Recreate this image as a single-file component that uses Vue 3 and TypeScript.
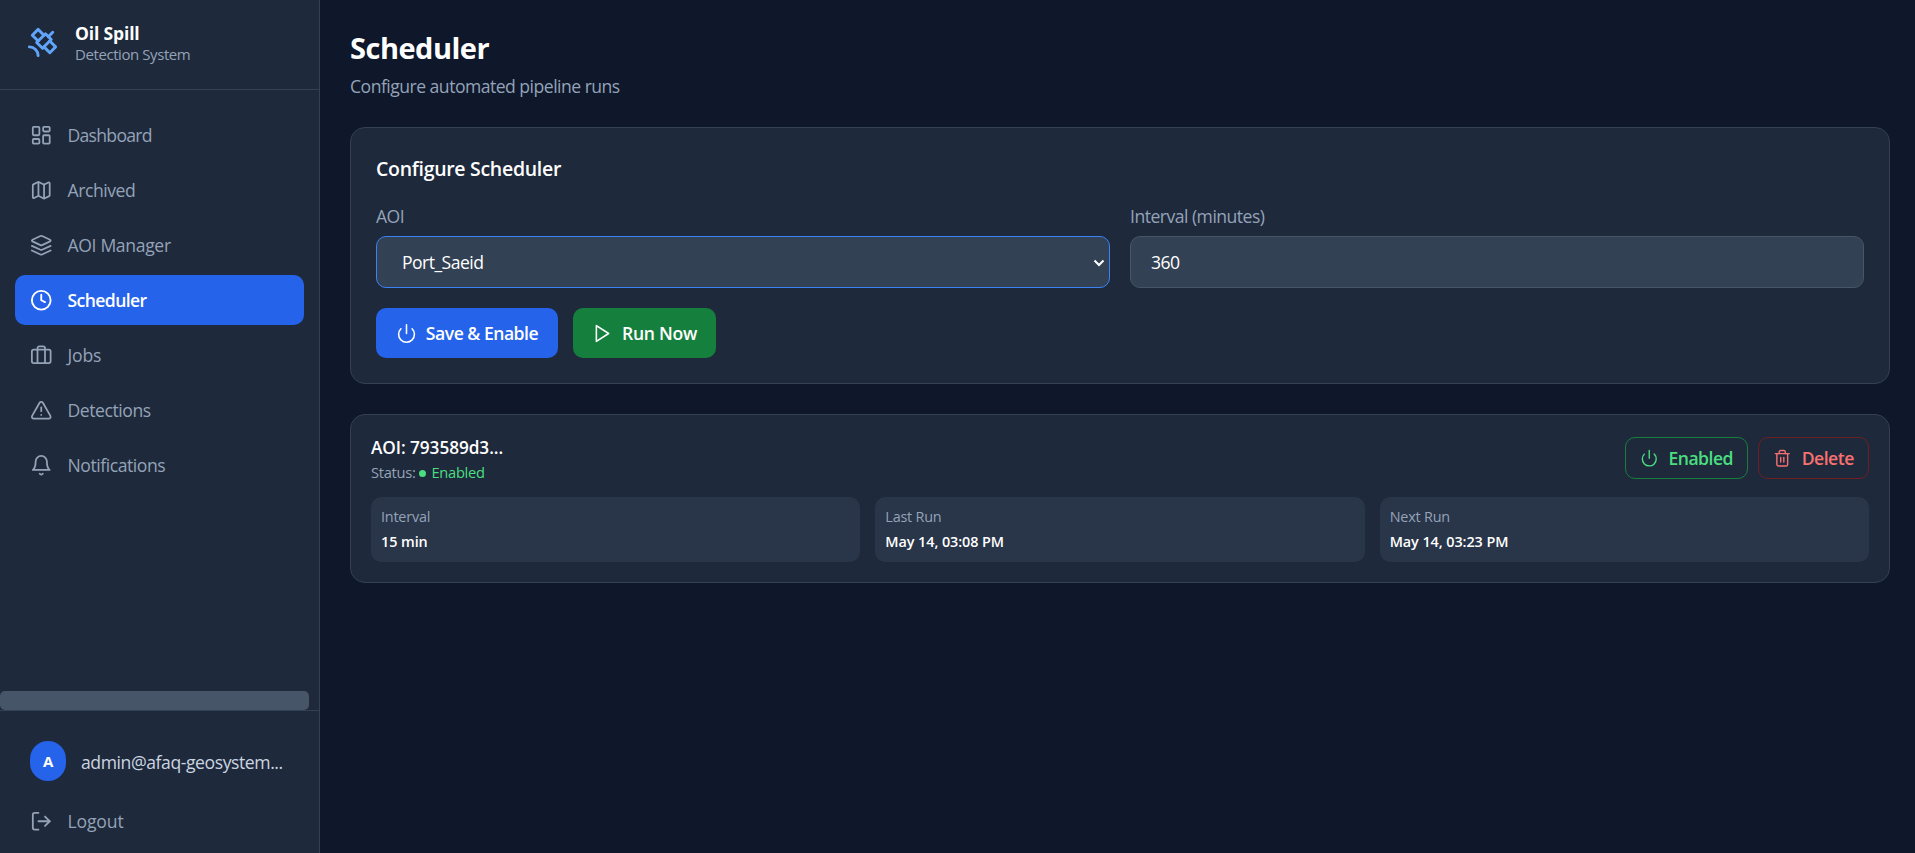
<script setup lang="ts">
import { ref } from 'vue'

interface NavItem {
  id: string
  label: string
  paths: string[]
}

const navItems: NavItem[] = [
  {
    id: 'dashboard',
    label: 'Dashboard',
    paths: [
      'M4 3h5a1 1 0 0 1 1 1v7a1 1 0 0 1-1 1H4a1 1 0 0 1-1-1V4a1 1 0 0 1 1-1z',
      'M15 3h5a1 1 0 0 1 1 1v3a1 1 0 0 1-1 1h-5a1 1 0 0 1-1-1V4a1 1 0 0 1 1-1z',
      'M15 12h5a1 1 0 0 1 1 1v7a1 1 0 0 1-1 1h-5a1 1 0 0 1-1-1v-7a1 1 0 0 1 1-1z',
      'M4 16h5a1 1 0 0 1 1 1v3a1 1 0 0 1-1 1H4a1 1 0 0 1-1-1v-3a1 1 0 0 1 1-1z',
    ],
  },
  {
    id: 'archived',
    label: 'Archived',
    paths: [
      'M14.106 5.553a2 2 0 0 0 1.788 0l3.659-1.83A1 1 0 0 1 21 4.619v12.764a1 1 0 0 1-.553.894l-4.553 2.277a2 2 0 0 1-1.788 0l-4.212-2.106a2 2 0 0 0-1.788 0l-3.659 1.83A1 1 0 0 1 3 19.381V6.618a1 1 0 0 1 .553-.894l4.553-2.277a2 2 0 0 1 1.788 0z',
      'M15 5.764v15',
      'M9 3.236v15',
    ],
  },
  {
    id: 'aoi',
    label: 'AOI Manager',
    paths: [
      'M12.83 2.18a2 2 0 0 0-1.66 0L2.6 6.08a1 1 0 0 0 0 1.83l8.58 3.91a2 2 0 0 0 1.66 0l8.58-3.9a1 1 0 0 0 0-1.83Z',
      'm22 17.65-9.17 4.16a2 2 0 0 1-1.66 0L2 17.65',
      'm22 12.65-9.17 4.16a2 2 0 0 1-1.66 0L2 12.65',
    ],
  },
  {
    id: 'scheduler',
    label: 'Scheduler',
    paths: ['M12 2a10 10 0 1 0 0 20 10 10 0 1 0 0-20z', 'M12 6v6l4 2'],
  },
  {
    id: 'jobs',
    label: 'Jobs',
    paths: [
      'M4 6h16a2 2 0 0 1 2 2v10.500a2 2 0 0 1-2 2H4a2 2 0 0 1-2-2V8a2 2 0 0 1 2-2z',
      'M16 20.500V4.500a2 2 0 0 0-2-2h-4a2 2 0 0 0-2 2v16',
    ],
  },
  {
    id: 'detections',
    label: 'Detections',
    paths: [
      'm21.730 18-8-14a2 2 0 0 0-3.480 0l-8 14A2 2 0 0 0 4 21h16a2 2 0 0 0 1.730-3Z',
      'M12 9v4',
      'M12 17h.01',
    ],
  },
  {
    id: 'notifications',
    label: 'Notifications',
    paths: ['M6 8a6 6 0 0 1 12 0c0 7 3 9 3 9H3s3-2 3-9', 'M10.300 21a1.940 1.940 0 0 0 3.400 0'],
  },
]

const active = ref('scheduler')
const aoi = ref('Port_Saeid')
const interval = ref('360')

const stats = [
  { label: 'Interval', value: '15 min' },
  { label: 'Last Run', value: 'May 14, 03:08 PM' },
  { label: 'Next Run', value: 'May 14, 03:23 PM' },
]
</script>

<template>
  <div class="shell">
    <aside class="sidebar">
      <header class="brand">
        <svg class="brand-icon" viewBox="0 0 24 24">
          <path d="M13 7 9 3 5 7l4 4" />
          <path d="m17 11 4 4-4 4-4-4" />
          <path d="m8 12 4 4 6-6-4-4Z" />
          <path d="m16 8 3-3" />
          <path d="M9 21a6 6 0 0 0-6-6" />
        </svg>
        <div>
          <div class="brand-name">Oil Spill</div>
          <div class="brand-sub">Detection System</div>
        </div>
      </header>

      <nav class="nav">
        <a
          v-for="item in navItems"
          :key="item.id"
          class="nav-item"
          :class="[item.id, { active: item.id === active }]"
          @click="active = item.id"
        >
          <svg class="icon" viewBox="0 0 24 24">
            <path v-for="d in item.paths" :key="d" :d="d" />
          </svg>
          <span>{{ item.label }}</span>
        </a>
      </nav>
      <div class="scroll-thumb"></div>

      <footer class="account">
        <div class="user">
          <div class="avatar">A</div>
          <span class="email">admin@afaq-geosystem...</span>
        </div>
        <a class="nav-item logout">
          <svg class="icon" viewBox="0 0 24 24">
            <path d="M9 21H5a2 2 0 0 1-2-2V5a2 2 0 0 1 2-2h4" />
            <path d="m16 17 5-5-5-5" />
            <path d="M21 12H9" />
          </svg>
          <span>Logout</span>
        </a>
      </footer>
    </aside>

    <main class="main">
      <h1>Scheduler</h1>
      <p class="subtitle">Configure automated pipeline runs</p>

      <section class="card config">
        <h2>Configure Scheduler</h2>
        <div class="fields">
          <div class="field">
            <label for="aoi">AOI</label>
            <div class="select-wrap">
              <select id="aoi" v-model="aoi" class="control focused">
                <option>Port_Saeid</option>
              </select>
              <svg class="chevron" viewBox="0 0 12 8"><path d="m1.500 1.500 4.500 4.500 4.500-4.500" /></svg>
            </div>
          </div>
          <div class="field">
            <label for="interval">Interval (minutes)</label>
            <input id="interval" v-model="interval" class="control" type="text" />
          </div>
        </div>
        <div class="actions">
          <button class="btn save">
            <svg class="btn-icon" viewBox="0 0 24 24">
              <path d="M12 2v10" />
              <path d="M18.400 6.600a9 9 0 1 1-12.770.04" />
            </svg>
            <span>Save &amp; Enable</span>
          </button>
          <button class="btn run">
            <svg class="btn-icon" viewBox="0 0 24 24"><path d="m5 3 14 9-14 9V3z" /></svg>
            <span>Run Now</span>
          </button>
        </div>
      </section>

      <section class="card job">
        <div class="job-head">
          <div>
            <div class="job-title">AOI: 793589d3...</div>
            <div class="job-status">
              <span>Status:</span><i class="dot"></i><span class="on">Enabled</span>
            </div>
          </div>
          <div class="job-actions">
            <button class="btn small enabled">
              <svg class="btn-icon" viewBox="0 0 24 24">
                <path d="M12 2v10" />
                <path d="M18.400 6.600a9 9 0 1 1-12.770.04" />
              </svg>
              <span>Enabled</span>
            </button>
            <button class="btn small delete">
              <svg class="btn-icon" viewBox="0 0 24 24">
                <path d="M3 6h18" />
                <path d="M19 6v14a2 2 0 0 1-2 2H7a2 2 0 0 1-2-2V6" />
                <path d="M8 6V4a2 2 0 0 1 2-2h4a2 2 0 0 1 2 2v2" />
                <path d="M10 11v6" />
                <path d="M14 11v6" />
              </svg>
              <span>Delete</span>
            </button>
          </div>
        </div>
        <div class="stats">
          <div v-for="s in stats" :key="s.label" class="stat">
            <div class="stat-label">{{ s.label }}</div>
            <div class="stat-value">{{ s.value }}</div>
          </div>
        </div>
      </section>
    </main>
  </div>
</template>

<style>
body {
  margin: 0;
  background: #0f172a;
  overflow: hidden;
}
</style>

<style scoped>
.shell {
  display: flex;
  height: 100vh;
  background: #0f172a;
  color: #fff;
  font-family: "Segoe UI", "Open Sans", "Noto Sans", sans-serif;
  font-size: 17.6px;
  letter-spacing: -0.52px;
}
.shell * {
  box-sizing: border-box;
}
svg {
  display: block;
  flex: none;
  fill: none;
  stroke: currentColor;
  stroke-width: 2;
  stroke-linecap: round;
  stroke-linejoin: round;
}

/* Sidebar */
.sidebar {
  display: flex;
  flex-direction: column;
  flex: none;
  box-sizing: border-box;
  width: 320px;
  background: #1e293b;
  border-right: 1px solid #334155;
}
.brand {
  display: flex;
  gap: 15px;
  height: 90px;
  padding: 22px 25px 0;
  border-bottom: 1px solid #334155;
}
.brand-icon {
  width: 35px;
  height: 35px;
  margin-top: 3px;
  color: #60a5fa;
}
.brand-name {
  font-size: 17.5px;
  font-weight: 700;
  line-height: 22px;
  letter-spacing: -0.15px;
}
.brand-sub {
  font-size: 15px;
  line-height: 20px;
  letter-spacing: -0.42px;
  color: #94a3b8;
}
.nav {
  display: flex;
  flex-direction: column;
  flex: 1;
  gap: 5px;
  padding: 20px 15px 0;
}
.nav-item {
  display: flex;
  align-items: center;
  gap: 15px;
  height: 50px;
  padding: 0 15px;
  border-radius: 10px;
  color: #94a3b8;
  letter-spacing: -0.45px;
  cursor: pointer;
}
.nav-item.active {
  background: #2563eb;
  color: #fff;
  font-weight: 600;
  letter-spacing: -0.6px;
}
.nav-item.dashboard {
  letter-spacing: -0.72px;
}
.nav-item.aoi {
  letter-spacing: -0.35px;
}
.nav-item.jobs,
.nav-item.logout {
  letter-spacing: -0.15px;
}
.icon {
  width: 22.5px;
  height: 22.5px;
}
.nav-item:not(.active) .icon {
  stroke-width: 1.9;
}
.scroll-thumb {
  flex: none;
  width: 309px;
  height: 19px;
  border-radius: 5px;
  background: #475569;
}
.account {
  flex: none;
  height: 143px;
  padding: 15px;
  border-top: 1px solid #334155;
}
.user {
  display: flex;
  align-items: center;
  gap: 15px;
  height: 70px;
  padding: 0 15px;
}
.avatar {
  display: flex;
  align-items: center;
  justify-content: center;
  width: 36px;
  height: 40px;
  border-radius: 18px;
  background: #2563eb;
  font-size: 15px;
  font-weight: 700;
}
.email {
  padding-top: 2px;
  color: #cbd5e1;
  letter-spacing: -0.43px;
}

/* Main column */
.main {
  flex: 1;
  min-width: 0;
  padding: 29px 25px 0 30px;
}
h1 {
  margin: 0;
  font-size: 29px;
  font-weight: 700;
  line-height: 38px;
  letter-spacing: -0.5px;
}
.subtitle {
  margin: 7px 0 29px;
  line-height: 24px;
  color: #94a3b8;
}
.card {
  border: 1px solid #334155;
  border-radius: 15px;
  background: #1e293b;
}
.config {
  padding: 26px 25px 25px;
}
h2 {
  margin: 0 0 21px;
  font-size: 19.5px;
  font-weight: 600;
  line-height: 30px;
  letter-spacing: -0.3px;
}
.fields {
  display: grid;
  grid-template-columns: 1fr 1fr;
  gap: 20px;
}
.field label {
  display: block;
  margin-bottom: 9px;
  line-height: 22px;
  color: #94a3b8;
}
.select-wrap {
  position: relative;
}
.control {
  display: block;
  width: 100%;
  height: 52px;
  margin: 0;
  padding: 0 20px;
  border: 1px solid #475569;
  border-radius: 10px;
  outline: none;
  appearance: none;
  background: #334155;
  color: #fff;
  font: inherit;
  letter-spacing: -0.55px;
}
.control.focused {
  padding-left: 25px;
  border-color: #3b82f6;
}
.chevron {
  position: absolute;
  top: 23px;
  right: 5px;
  width: 12px;
  height: 8px;
  pointer-events: none;
  stroke-linecap: butt;
  stroke-linejoin: miter;
}
.actions {
  display: flex;
  gap: 15px;
  margin-top: 20px;
}
.btn {
  display: flex;
  align-items: center;
  justify-content: center;
  height: 50px;
  padding: 0;
  border: 0;
  border-radius: 10px;
  color: #fff;
  font: inherit;
  font-weight: 600;
  letter-spacing: -0.5px;
  cursor: pointer;
}
.btn-icon {
  width: 21px;
  height: 21px;
  stroke-width: 1.8;
}
.save {
  gap: 9px;
  width: 182px;
  background: #2563eb;
}
.run {
  gap: 9px;
  width: 143px;
  background: #15803d;
  letter-spacing: -0.3px;
}

/* Scheduled job card */
.job {
  margin-top: 30px;
  padding: 20px;
}
.job-head {
  display: flex;
  align-items: center;
  justify-content: space-between;
  height: 46px;
  margin-bottom: 16px;
}
.job-title {
  font-size: 17.2px;
  font-weight: 600;
  line-height: 26px;
  letter-spacing: -0.05px;
}
.job-status {
  display: flex;
  align-items: center;
  padding-top: 1px;
  margin-bottom: -1px;
  font-size: 14.7px;
  line-height: 20px;
  letter-spacing: -0.3px;
  color: #94a3b8;
}
.dot {
  width: 7px;
  height: 7px;
  margin: 2px 5px 0 4px;
  border-radius: 50%;
  background: #4ade80;
}
.on {
  color: #4ade80;
}
.job-actions {
  display: flex;
  gap: 10px;
}
.small {
  gap: 10px;
  height: 42px;
  border: 1px solid;
  background: transparent;
}
.small .btn-icon {
  width: 18.5px;
  height: 18.5px;
}
.enabled {
  width: 123px;
  border-color: #15803d;
  color: #4ade80;
}
.delete {
  width: 111px;
  border-color: rgba(127, 29, 29, 0.85);
  color: #f87171;
}
.stats {
  display: grid;
  grid-template-columns: repeat(3, 1fr);
  gap: 15px;
}
.stat {
  height: 65px;
  padding: 10px;
  border-radius: 10px;
  background: rgba(51, 65, 85, 0.5);
  font-size: 14.4px;
  line-height: 20px;
}
.stat-label {
  margin-bottom: 5px;
  color: #94a3b8;
  letter-spacing: -0.2px;
}
.stat-value {
  font-weight: 600;
  letter-spacing: -0.07px;
}
</style>
